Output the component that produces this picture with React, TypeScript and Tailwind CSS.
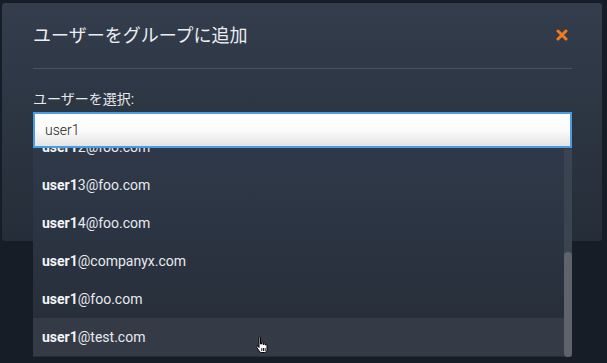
import React from "react";

const items = [
  { rest: "2@foo.com" },
  { rest: "3@foo.com" },
  { rest: "4@foo.com" },
  { rest: "@companyx.com" },
  { rest: "@foo.com" },
  { rest: "@test.com", active: true },
];

export default function App() {
  return (
    <div
      className="relative w-[607px] h-[363px] overflow-hidden bg-[#161d26] pt-[3px] pl-[2px]"
      style={{ fontFamily: 'Roboto, "Noto Sans CJK JP", sans-serif' }}
    >
      <div className="relative w-[600px] h-[238px] rounded-[3px] bg-gradient-to-b from-[#333d4c] to-[#252d38] pl-[31px] pr-[30px]">
        <div className="flex items-center justify-between h-[66px] border-b border-[#4a5260]">
          <div className="text-[18px] text-[#eceef1] leading-[26px] pt-[1px]">ユーザーをグループに追加</div>
          <svg width="12" height="12" viewBox="0 0 12 12" className="mr-[4px] mb-[1px]">
            <path d="M2 2 L10 10 M10 2 L2 10" stroke="#f47a1f" strokeWidth="3" strokeLinecap="round" />
          </svg>
        </div>
        <div className="mt-[22px] text-[14px] leading-[16px] text-[#e6e8eb]">ユーザーを選択:</div>
        <div className="relative mt-[5px]">
          <div className="h-[36px] border-2 border-[#4a9de2] bg-gradient-to-b from-[#ffffff] via-[#fbfbfb] to-[#e4e4e4] flex items-center pl-[10px] text-[14px] font-light text-[#222]">
            user1
          </div>
          <div className="absolute left-0 right-0 top-[36px] h-[209px] overflow-hidden bg-gradient-to-b from-[#2f3949] to-[#262d38] z-10">
            <div className="-mt-[20px]">
              {items.map((it, i) => (
                <div
                  key={i}
                  className={`h-[38px] flex items-center pl-[9px] text-[14px] text-[#e8eaed] font-normal ${it.active ? "bg-[#353b46] mr-[8px]" : ""}`}
                >
                  <span className="font-bold text-[#f4f5f7]">user1</span>
                  <span>{it.rest}</span>
                </div>
              ))}
            </div>
            <div className="absolute right-0 top-[1px] bottom-0 w-[8px] bg-[#3a4350] rounded-b-[4px]">
              <div className="absolute left-0 right-0 bottom-0 h-[105px] rounded-[4px] bg-[#5e636c]" />
            </div>
          </div>
        </div>
      </div>
      <svg
        className="absolute left-[255px] top-[336px] z-20"
        width="14"
        height="18"
        viewBox="0 0 14 18"
      >
        <path
          d="M4 1.5 C4 0.8 5.5 0.8 5.5 1.5 L5.5 8 L6.5 8 L6.5 6.5 C6.5 5.8 8 5.8 8 6.5 L8 8.5 L8.5 8.5 L8.5 7.5 C8.5 6.8 10 6.8 10 7.5 L10 9 L10.5 9 C10.5 8.3 12 8.3 12 9 L12 13.5 C12 15 11 16.5 9.5 16.5 L6.5 16.5 C5 16.5 4.5 15.5 3.5 14 L1.5 11 C1 10.2 2 9.5 2.8 10.2 L4 11.5 Z"
          fill="#fff"
          stroke="#000"
          strokeWidth="1"
        />
        <path d="M6.8 12 L6.8 15 M8.5 12 L8.5 15 M10.2 12 L10.2 15" stroke="#000" strokeWidth="0.9" />
      </svg>
    </div>
  );
}
